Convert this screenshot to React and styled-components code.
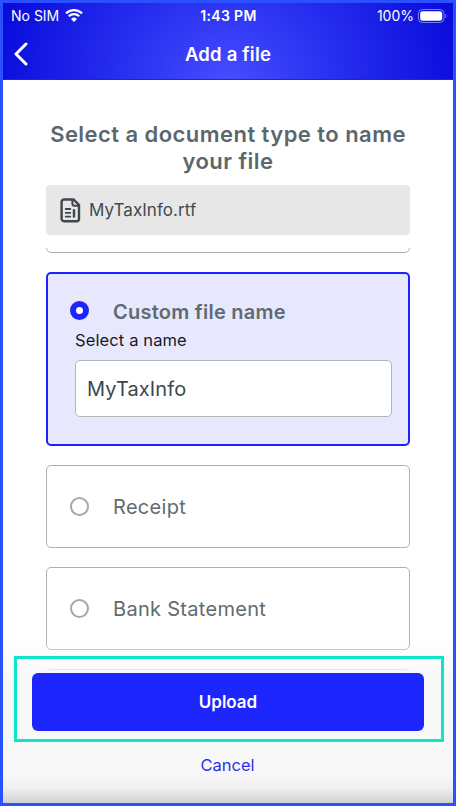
import { useState } from "react";
import styled, { createGlobalStyle } from "styled-components";

const GlobalStyle = createGlobalStyle`
  * {
    box-sizing: border-box;
  }
  body {
    margin: 0;
    font-family: Inter, "Liberation Sans", sans-serif;
  }
`;

const Screen = styled.div`
  position: relative;
  display: flex;
  flex-direction: column;
  width: 456px;
  height: 806px;
  border: 3px solid #2b50ff;
  background: #ffffff;
  overflow: hidden;
`;

const Header = styled.header`
  flex: none;
  height: 77px;
  color: #ffffff;
  background: radial-gradient(
    ellipse 245px 210px at 50% 100%,
    #454dff 0%,
    #2930f0 42%,
    #0709da 100%
  );
  border-bottom: 1px solid #2229b4;
`;

const StatusBar = styled.div`
  display: grid;
  grid-template-columns: 1fr auto 1fr;
  align-items: center;
  height: 25px;
  padding: 0 6px 0 8px;
  font-size: 14px;
`;

const StatusGroup = styled.div`
  display: flex;
  align-items: center;
  justify-content: ${(props) => (props.$end ? "flex-end" : "flex-start")};
  gap: ${(props) => (props.$end ? "4px" : "6px")};
`;

const Clock = styled.span`
  margin-right: 1px;
  font-weight: 600;
  font-size: 14px;
  letter-spacing: 0.35px;
`;

const NavBar = styled.div`
  display: grid;
  grid-template-columns: 40px 1fr 40px;
  align-items: center;
  height: 51px;
`;

const IconButton = styled.button`
  display: flex;
  padding: 0 0 0 10px;
  border: none;
  background: none;
  color: inherit;
`;

const Title = styled.h1`
  margin: 0;
  font-size: 18.5px;
  font-weight: 600;
  letter-spacing: 0.2px;
  text-align: center;
`;

const Content = styled.main`
  display: flex;
  flex: 1;
  flex-direction: column;
  min-height: 0;
  padding: 41px 43px 0;
`;

const Heading = styled.h2`
  flex: none;
  margin: 0 -10px;
  color: #5c676d;
  font-size: 22px;
  font-weight: 600;
  line-height: 27px;
  letter-spacing: 0.45px;
  text-align: center;
`;

const FileBar = styled.div`
  display: flex;
  flex: none;
  align-items: center;
  gap: 7px;
  height: 50px;
  margin: 10px 0 13px;
  padding-left: 14px;
  border-radius: 4px;
  background: #e7e7e7;
  color: #414a50;
  font-size: 17px;
  letter-spacing: 0.05px;
`;

const OptionList = styled.div`
  display: flex;
  flex: 1;
  flex-direction: column;
  gap: 19px;
  min-height: 0;
  overflow: hidden;
`;

const Card = styled.div`
  flex: none;
  height: ${(props) => (props.$selected ? "174px" : "83px")};
  padding: ${(props) => (props.$selected ? "24px 16px 0 22px" : "27px 23px 0")};
  border: ${(props) =>
    props.$selected ? "2px solid #1c24fb" : "1px solid #b0b0b0"};
  border-radius: 5px;
  background: ${(props) => (props.$selected ? "#e7e7fe" : "#ffffff")};
`;

const ScrolledCard = styled(Card)`
  margin-top: -78px;
`;

const Option = styled.label`
  display: flex;
  align-items: center;
  gap: 24px;
  height: 28px;
  color: #5f6b71;
  font-size: 20px;
  font-weight: ${(props) => (props.$selected ? 600 : 400)};
  letter-spacing: ${(props) => (props.$selected ? "0.25px" : "0.3px")};
`;

const Radio = styled.input`
  appearance: none;
  flex: none;
  width: 19px;
  height: 19px;
  margin: 0 0 1px;
  border: 2px solid #a8a8a8;
  border-radius: 50%;
  background: #ffffff;

  &:checked {
    margin-bottom: 3px;
    border: 6px solid #1c24fb;
  }
`;

const NameField = styled.label`
  display: flex;
  flex-direction: column;
  gap: 8px;
  padding: 2px 0 0 5px;
  color: #17191c;
  font-size: 16.5px;
  line-height: 24px;
  letter-spacing: 0.12px;
`;

const NameInput = styled.input`
  width: 100%;
  height: 57px;
  padding: 0 11px;
  border: 1px solid #b5b5b5;
  border-radius: 5px;
  outline: none;
  background: #ffffff;
  color: #3c484e;
  font-family: inherit;
  font-size: 20px;
  letter-spacing: 0.1px;
`;

const Footer = styled.footer`
  position: absolute;
  left: 0;
  right: 0;
  bottom: 0;
  display: flex;
  flex-direction: column;
  align-items: center;
  height: 163px;
  padding: 16px 9px 0 11px;
  background:
    linear-gradient(
      to bottom,
      rgba(220, 220, 220, 0) 82%,
      rgba(215, 215, 215, 0.25) 91%,
      rgba(200, 200, 200, 0.8) 100%
    ),
    linear-gradient(
      to bottom,
      rgba(248, 248, 248, 0) 0,
      rgba(248, 248, 248, 0.35) 12px,
      rgba(248, 248, 248, 0.75) 29px,
      #f8f8f8 37px
    );
`;

const Highlight = styled.div`
  width: 100%;
  height: 86px;
  padding: 14px 17px 0 15px;
  border: 3px solid #0ce5c8;
`;

const UploadButton = styled.button`
  display: block;
  width: 100%;
  height: 58px;
  border: none;
  border-radius: 6px;
  background: #1c26fc;
  color: #ffffff;
  font-family: inherit;
  font-size: 17px;
  font-weight: 600;
`;

const CancelButton = styled.button`
  margin: 12px 3px 0 0;
  padding: 0;
  border: none;
  background: none;
  color: #2a31e8;
  font-family: inherit;
  font-size: 16.5px;
  line-height: 22px;
`;

function WifiIcon() {
  return (
    <svg width="18" height="13" viewBox="0 0 18 13" fill="none">
      <path
        d="M1 4.4a11.4 11.4 0 0 1 16 0M3.8 7.3a7.5 7.5 0 0 1 10.4 0"
        stroke="currentColor"
        strokeWidth="2.2"
      />
      <path d="M6 9.9a4.3 4.3 0 0 1 6 0L9 12.9z" fill="currentColor" />
    </svg>
  );
}

function BatteryIcon() {
  return (
    <svg width="29" height="14" viewBox="0 0 29 14" fill="none">
      <rect
        x="0.5"
        y="0.5"
        width="25.5"
        height="13"
        rx="4"
        stroke="#ffffff"
        strokeOpacity="0.45"
      />
      <rect x="2.2" y="2.2" width="22" height="9.6" rx="2.4" fill="#ffffff" />
      <path d="M27.3 5v4c1.5-.6 1.5-3.4 0-4z" fill="#ffffff" opacity="0.5" />
    </svg>
  );
}

function BackIcon() {
  return (
    <svg width="16" height="24" viewBox="0 0 16 24" fill="none">
      <path
        d="M13 2L3 12l10 10"
        stroke="currentColor"
        strokeWidth="3"
        strokeLinecap="round"
        strokeLinejoin="round"
      />
    </svg>
  );
}

function FileIcon() {
  return (
    <svg width="22" height="25" viewBox="0 0 22 25" fill="none">
      <path
        d="M4 1.5h9.6l5.4 5.4V20.8a2.4 2.4 0 0 1-2.4 2.4H4a2.4 2.4 0 0 1-2.4-2.4V3.9A2.4 2.4 0 0 1 4 1.5z"
        stroke="#41454c"
        strokeWidth="2.4"
      />
      <path
        d="M12.4 1.5v4.3a2 2 0 0 0 2 2H19"
        stroke="#41454c"
        strokeWidth="2"
      />
      <path
        d="M5.7 11h4.6M5.7 14.8h4.6M5.7 18.6h4.6"
        stroke="#41454c"
        strokeWidth="1.8"
        strokeLinecap="round"
      />
      <path
        d="M14 12.3v6.2"
        stroke="#41454c"
        strokeWidth="2.4"
        strokeLinecap="round"
      />
    </svg>
  );
}

const documentTypes = ["Receipt", "Bank Statement"];

function App() {
  const [selected, setSelected] = useState("Custom file name");
  const [name, setName] = useState("MyTaxInfo");

  const handleChange = (event) => {
    setSelected(event.currentTarget.value);
  };

  return (
    <Screen>
      <GlobalStyle />
      <Header>
        <StatusBar>
          <StatusGroup>
            No SIM <WifiIcon />
          </StatusGroup>
          <Clock>1:43 PM</Clock>
          <StatusGroup $end>
            100% <BatteryIcon />
          </StatusGroup>
        </StatusBar>
        <NavBar>
          <IconButton>
            <BackIcon />
          </IconButton>
          <Title>Add a file</Title>
        </NavBar>
      </Header>
      <Content>
        <Heading>
          Select a document type to name
          <br />
          your file
        </Heading>
        <FileBar>
          <FileIcon />
          MyTaxInfo.rtf
        </FileBar>
        <OptionList>
          <ScrolledCard />
          <Card $selected>
            <Option $selected>
              <Radio
                type="radio"
                name="type"
                value="Custom file name"
                checked={selected === "Custom file name"}
                onChange={handleChange}
              />
              Custom file name
            </Option>
            <NameField>
              Select a name
              <NameInput
                type="text"
                value={name}
                onChange={(event) => setName(event.currentTarget.value)}
              />
            </NameField>
          </Card>
          {documentTypes.map((type) => (
            <Card key={type}>
              <Option>
                <Radio
                  type="radio"
                  name="type"
                  value={type}
                  checked={selected === type}
                  onChange={handleChange}
                />
                {type}
              </Option>
            </Card>
          ))}
          <Card />
        </OptionList>
      </Content>
      <Footer>
        <Highlight>
          <UploadButton>Upload</UploadButton>
        </Highlight>
        <CancelButton>Cancel</CancelButton>
      </Footer>
    </Screen>
  );
}

export default App;
